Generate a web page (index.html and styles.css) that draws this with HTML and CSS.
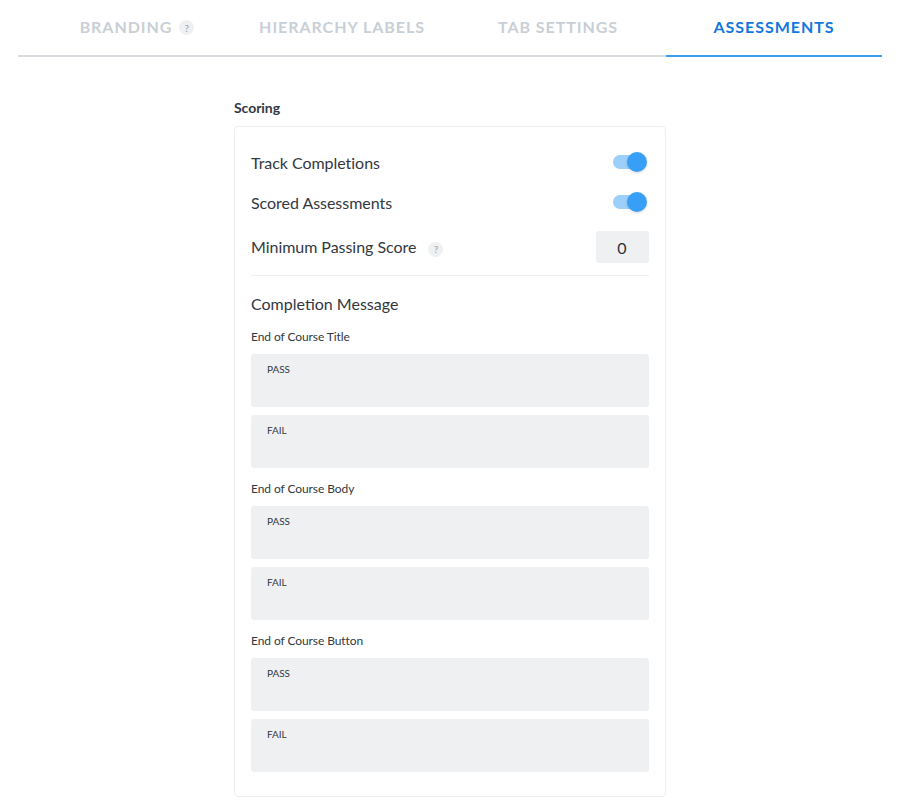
FILE: index.html
```html
<!DOCTYPE html>
<html lang="en">
<head>
  <meta charset="UTF-8">
  <title>Assessments</title>
  <link rel="stylesheet" href="styles.css">
</head>
<body>
  <div class="tabs">
    <div class="tab"><span class="tab-text">BRANDING<span class="help help-tab">?</span></span></div>
    <div class="tab">HIERARCHY LABELS</div>
    <div class="tab">TAB SETTINGS</div>
    <div class="tab active">ASSESSMENTS</div>
  </div>

  <div class="content">
    <h2 class="section-title">Scoring</h2>
    <div class="card">
      <div class="row row-track">
        <span class="row-label">Track Completions</span>
        <div class="toggle"><div class="knob"></div></div>
      </div>
      <div class="row row-scored">
        <span class="row-label">Scored Assessments</span>
        <div class="toggle"><div class="knob"></div></div>
      </div>
      <div class="row row-score">
        <span class="row-label">Minimum Passing Score <span class="help help-row">?</span></span>
        <div class="score-input">0</div>
      </div>
      <hr class="divider">

      <h3 class="message-title">Completion Message</h3>

      <div class="field-label">End of Course Title</div>
      <div class="field"><span>PASS</span></div>
      <div class="field"><span>FAIL</span></div>

      <div class="field-label">End of Course Body</div>
      <div class="field"><span>PASS</span></div>
      <div class="field"><span>FAIL</span></div>

      <div class="field-label">End of Course Button</div>
      <div class="field"><span>PASS</span></div>
      <div class="field"><span>FAIL</span></div>
    </div>
  </div>
</body>
</html>
```

FILE: styles.css
```css
body {
    font-family: Lato, "Open Sans", sans-serif;
    margin: 0;
    padding: 0 18px;
    background-color: #ffffff;
    color: #2d3239;
}

.tabs {
    display: flex;
    height: 57px;
    box-sizing: border-box;
    border-bottom: 2px solid #d9dde1;
}

.tab {
    flex: 1;
    height: 57px;
    box-sizing: border-box;
    padding-top: 17px;
    text-align: center;
    font-size: 16px;
    line-height: 20px;
    font-weight: 700;
    letter-spacing: 0.95px;
    color: #c9cfd6;
}

.tab.active {
    color: #1277dd;
    border-bottom: 2px solid #3b9ef3;
}

.tab-text {
    position: relative;
    display: inline-block;
}

.help {
    display: inline-flex;
    align-items: center;
    justify-content: center;
    border-radius: 50%;
    width: 15px;
    height: 15px;
    background-color: #eef0f2;
    color: #9aa1a9;
    font-size: 10px;
    font-weight: 400;
    letter-spacing: 0;
}

.help-tab {
    position: absolute;
    top: 3px;
    left: calc(100% + 7px);
}

.help-row {
    margin-left: 8px;
}

.content {
    width: 432px;
    margin: 0 auto;
    padding-top: 42px;
}

.section-title {
    margin: 0 0 10px;
    font-size: 14px;
    line-height: 17px;
    font-weight: 700;
    letter-spacing: -0.05px;
    color: #33383f;
}

.card {
    box-sizing: border-box;
    height: 671px;
    padding: 0 16px;
    border: 1px solid #eceef0;
    border-radius: 4px;
}

.row {
    display: flex;
    align-items: center;
    justify-content: space-between;
}

.row-label {
    font-size: 16px;
    letter-spacing: -0.04px;
    color: #33383f;
}

.row-track {
    height: 32px;
    margin-top: 20px;
}

.row-scored {
    height: 32px;
    margin-top: 8px;
}

.row-track .row-label,
.row-scored .row-label {
    padding-bottom: 2px;
}

.row-score {
    height: 32px;
    margin-top: 12px;
}

.toggle {
    position: relative;
    width: 28px;
    height: 14px;
    margin-right: 8px;
    border-radius: 7px;
    background-color: #9ccff9;
    top: -1px;
}

.knob {
    position: absolute;
    top: -3px;
    left: 14px;
    width: 20px;
    height: 20px;
    border-radius: 50%;
    background-color: #379ff5;
    box-shadow: 0 1px 3px rgba(0, 0, 0, 0.15);
}

.score-input {
    width: 53px;
    height: 32px;
    border-radius: 3px;
    background-color: #eff0f2;
    font-size: 16px;
    line-height: 34px;
    text-align: center;
    padding-right: 1px;
    box-sizing: border-box;
}

.divider {
    height: 1px;
    margin: 12px 0 0;
    border: none;
    background-color: #eceef0;
}

.message-title {
    margin: 18px 0 0;
    font-size: 16px;
    line-height: 20px;
    font-weight: 400;
    color: #33383f;
}

.field-label {
    margin: 13px 0 9px;
    font-size: 12px;
    line-height: 16px;
    letter-spacing: -0.08px;
    color: #33383f;
}

.message-title + .field-label {
    margin-top: 15px;
}

.field {
    box-sizing: border-box;
    height: 53px;
    margin-top: 8px;
    padding: 9px 16px 0;
    border-radius: 3px;
    background-color: #eff0f2;
    font-size: 10px;
    line-height: 12px;
    letter-spacing: -0.05px;
    color: #33383f;
}

.field-label + .field {
    margin-top: 0;
}
```
